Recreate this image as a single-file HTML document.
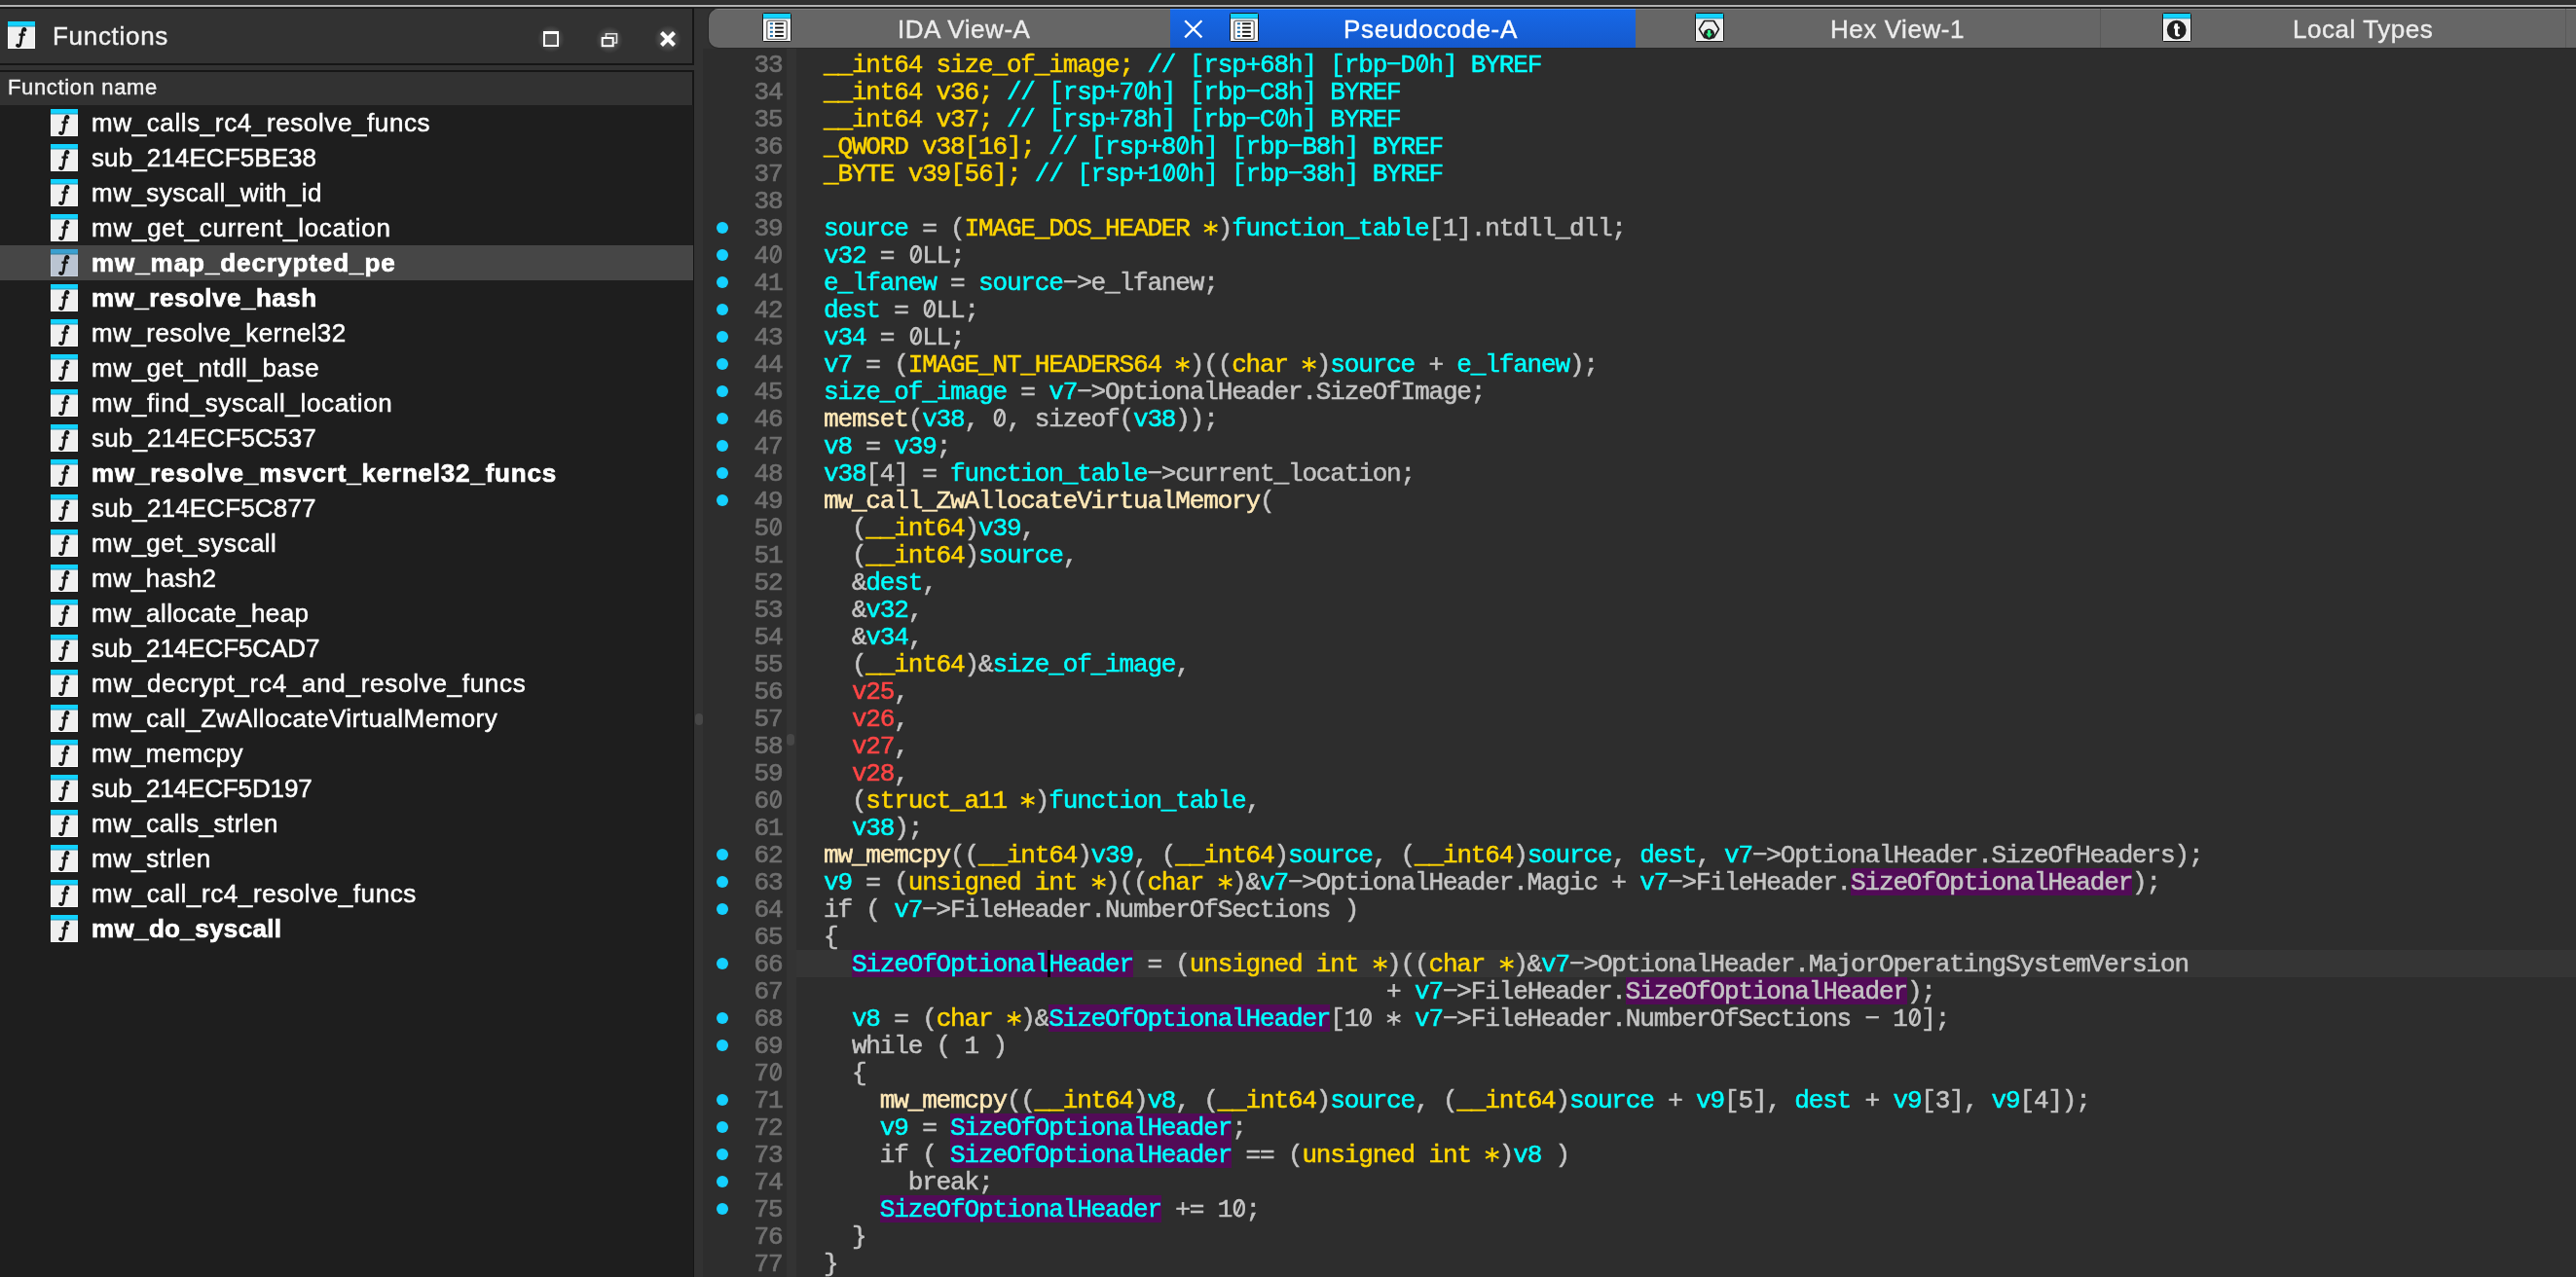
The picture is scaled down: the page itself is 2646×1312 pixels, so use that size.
<!DOCTYPE html>
<html><head><meta charset="utf-8"><title>IDA</title>
<style>
html,body{margin:0;padding:0;font-family:"Liberation Sans",sans-serif;}
html{width:2646px;height:1312px;overflow:hidden;background:#2d2d2d;}
body{width:2646px;height:1312px;overflow:hidden;background:#2d2d2d;position:relative;font-family:"Liberation Sans",sans-serif;}
div,span,b,i,em{box-sizing:border-box;}
.abs{position:absolute;}
#all{position:absolute;left:0;top:0;width:2646px;height:1312px;will-change:transform;overflow:hidden;}
/* top strip */
#top0{position:absolute;left:0;top:0;width:2646px;height:5px;background:linear-gradient(#303030 0,#303030 4px,#282828 4px);}
#topline{position:absolute;left:0;top:5px;width:2646px;height:2px;background:#b2b2b2;}
#topline2{position:absolute;left:0;top:7px;width:2646px;height:2px;background:#222222;}
/* left panel */
#lp{position:absolute;left:0;top:9px;width:722px;height:1303px;background:#323232;}
#tabbg{position:absolute;left:713px;top:9px;width:1933px;height:41px;background:#323232;}
#ltitle{position:absolute;left:0;top:8px;width:713px;height:59px;background:#323232;border-top:1px solid #161616;border-right:2px solid #161616;border-bottom:2px solid #161616;}
#ttl{-webkit-text-stroke:0.4px;position:absolute;left:54px;top:11px;font-size:26px;line-height:34px;color:#f2f2f2;letter-spacing:0.7px;}
.wbtn{position:absolute;}
#lhead{position:absolute;left:0;top:72px;width:713px;height:36px;background:#323232;border-top:2px solid #161616;border-right:2px solid #161616;}
#lhead span{-webkit-text-stroke:0.4px;position:absolute;left:8px;top:1px;font-size:22px;line-height:30px;color:#f2f2f2;letter-spacing:0.65px;}
#flist{position:absolute;left:0;top:108px;width:713px;height:1204px;background:#1e1e1e;overflow:hidden;border-right:1px solid #151515;}
.row{position:absolute;left:0;width:712px;height:36px;color:#fff;font-size:26px;line-height:36px;white-space:nowrap;letter-spacing:0.63px;}
.row span{position:absolute;left:94px;top:0;-webkit-text-stroke:0.5px;}
.row.b span{font-weight:bold;letter-spacing:0.9px;-webkit-text-stroke:0.7px;}
.row.sel{background:#464646;}
.fi{position:absolute;left:52px;top:4px;}
.fi.big{left:7.7px;top:12.8px;}
/* tabs */
#tabs{position:absolute;left:728px;top:9px;width:1918px;height:40px;background:#666666;box-shadow:0 0 0 1px #282828;border-radius:10px 0 0 10px;overflow:hidden;}
#thl{position:absolute;left:0;top:0;width:1918px;height:1px;background:#7e7e7e;}
#tabsel{position:absolute;left:474px;top:0;width:478px;height:40px;background:linear-gradient(#1769e8,#1559cd);box-shadow:inset 0 1px 0 #4b8df0;}
.tsep{position:absolute;top:0;width:1px;height:40px;background:#5a5a5a;}
.ticon{position:absolute;}
.tt{-webkit-text-stroke:0.4px;position:absolute;top:4px;font-size:26px;line-height:34px;color:#ececec;white-space:nowrap;letter-spacing:0.55px;}
.tt.sel{color:#fff;letter-spacing:0.7px;}
/* code */
#gut1{position:absolute;left:722px;top:50px;width:86px;height:1262px;background:#2d2d2d;}
#gut2{position:absolute;left:808px;top:50px;width:10px;height:1262px;background:#333333;}
#curline{position:absolute;left:818px;top:976px;width:1828px;height:28px;background:#353535;}
#code{position:absolute;left:0;top:0;width:2646px;height:1312px;font-family:"Liberation Mono",monospace;font-size:26px;letter-spacing:-1.15px;line-height:28px;color:#c4c4c4;white-space:pre;-webkit-text-stroke:0.55px;}
.ast{display:inline-block;width:14.45px;height:28px;vertical-align:top;overflow:visible;}
.cl{position:absolute;left:846px;height:28px;}
.ln{position:absolute;left:774.5px;height:28px;color:#707070;-webkit-text-stroke:0.7px;}
.dot{position:absolute;left:735.7px;width:12.6px;height:12.6px;border-radius:50%;background:#14d0ff;}
#cursor{position:absolute;left:1076px;top:976px;width:3px;height:28px;background:#000;}
.y{color:#ffd500;}
.c{color:#00ffff;}
.f{color:#ffe9b8;}
.r{color:#ff4545;}
.p{color:#00ffff;background:linear-gradient(#520b57,#520b57) no-repeat 0 0/100% 28px;}
.P{color:#c4c4c4;background:linear-gradient(#520b57,#520b57) no-repeat 0 0/100% 28px;}

</style></head>
<body>
<div id="all">
<div id="top0"></div><div id="topline"></div><div id="topline2"></div>
<div id="lp"></div><div id="tabbg"></div>
<div id="ltitle">
  <svg class="fi big" width="28" height="28" viewBox="0 0 28.5 28.5"><use href="#fico"/></svg>
  <span id="ttl">Functions</span>
  <svg class="wbtn" style="left:546px;top:11px" width="40" height="40" viewBox="0 0 40 40">
    <defs><radialGradient id="gl"><stop offset="0" stop-color="#5a5a5a"/><stop offset="0.6" stop-color="#4c4c4c"/><stop offset="1" stop-color="#323232"/></radialGradient></defs>
    <circle cx="20" cy="20" r="14" fill="url(#gl)"/>
    <rect x="13" y="13.5" width="14" height="13.5" fill="#555" stroke="#fff" stroke-width="2"/>
    <rect x="12" y="12" width="16" height="3" fill="#fff"/>
  </svg>
  <svg class="wbtn" style="left:606px;top:11px" width="40" height="40" viewBox="0 0 40 40">
    <circle cx="20" cy="21" r="14" fill="url(#gl)"/>
    <path d="M16.5 18 V14.7 H27.5 V24 H25" fill="none" stroke="#e0e0e0" stroke-width="1.6"/>
    <rect x="12.7" y="19" width="11" height="8.2" fill="#555" stroke="#fff" stroke-width="2"/>
  </svg>
  <svg class="wbtn" style="left:666px;top:11px" width="40" height="40" viewBox="0 0 40 40">
    <circle cx="20" cy="20" r="14" fill="url(#gl)"/>
    <path d="M13.5 13.5 L26.5 26.5 M26.5 13.5 L13.5 26.5" stroke="#fff" stroke-width="4.2" stroke-linecap="butt"/>
  </svg>
</div>
<div id="lhead"><span>Function name</span></div>
<!-- splitter handles -->
<div class="abs" style="left:713.6px;top:733px;width:8.4px;height:12px;border-radius:4px;background:#474747"></div>
<div class="abs" style="left:808px;top:754px;width:8px;height:12px;border-radius:4px;background:#474747;z-index:3"></div>
<!-- code gutters -->
<div id="gut1"></div><div id="gut2"></div>
<div id="curline"></div>
<!-- tab bar -->
<div id="tabs">
  <div id="thl"></div>
  <div id="tabsel"></div>
  <div class="tsep" style="left:1429px"></div>
  <div class="tsep" style="left:1907px"></div>
  <svg class="ticon" style="left:55px;top:4px" width="30" height="30" viewBox="0 0 30 30"><use href="#lsticon"/></svg>
  <span class="tt" style="left:194px">IDA View-A</span>
  <svg class="abs" style="left:488.3px;top:11.2px" width="20" height="20" viewBox="0 0 20 20"><path d="M1.2 1.2 L18.4 18.4 M18.4 1.2 L1.2 18.4" stroke="#fff" stroke-width="2.3"/></svg>
  <svg class="ticon" style="left:535px;top:4px" width="30" height="30" viewBox="0 0 30 30"><use href="#lsticon"/></svg>
  <span class="tt sel" style="left:652px">Pseudocode-A</span>
  <svg class="ticon" style="left:1013px;top:4px" width="30" height="30" viewBox="0 0 30 30">
    <rect x="0.5" y="0.5" width="29" height="29" rx="1" fill="#fff" stroke="#161616"/>
    <rect x="2" y="7" width="26" height="21" fill="#efefef"/>
    <rect x="1" y="1" width="28" height="5" fill="#12d2ff"/><rect x="1" y="5.4" width="28" height="1" fill="#2b8eaa"/>
    <path d="M4.4 16.9 L9.7 8.5 H19.4 L24.6 16.9 L19.4 25.6 H9.7 Z" fill="none" stroke="#1e1e1e" stroke-width="1.7" stroke-linejoin="round"/>
    <circle cx="14.5" cy="22.1" r="5.6" fill="#212121"/>
    <path d="M13 18 H16 V21.6 H18 L14.5 26 L11.2 21.6 H13 Z" fill="#2df08c"/>
  </svg>
  <span class="tt" style="left:1152px">Hex View-1</span>
  <svg class="ticon" style="left:1493px;top:4px" width="30" height="30" viewBox="0 0 30 30">
    <rect x="0.5" y="0.5" width="29" height="29" rx="1" fill="#fff" stroke="#161616"/>
    <rect x="2" y="7" width="26" height="21" fill="#efefef"/>
    <rect x="1" y="1" width="28" height="5" fill="#12d2ff"/><rect x="1" y="5.4" width="28" height="1" fill="#2b8eaa"/>
    <circle cx="14.7" cy="17.7" r="9.9" fill="#212121"/>
    <path d="M13.0 11.3 H16.1 V14.6 H17.9 V16.4 H16.1 V20.8 Q16.1 22.4 17.3 22.4 Q17.7 22.4 18.1 22.2 V24.0 Q17.2 24.4 16.2 24.4 Q13.0 24.4 13.0 21.2 V16.4 H11.9 V14.9 Z" fill="#fff"/>
  </svg>
  <span class="tt" style="left:1627px">Local Types</span>
</div>
<svg width="0" height="0" style="position:absolute">
  <defs>
    <g id="ast" fill="none" stroke="currentColor" stroke-width="2.15" stroke-linecap="butt"><path d="M7.7 6.1 V20.7 M1.0 9.95 L14.4 16.85 M14.4 9.95 L1.0 16.85"/></g>
    <g id="zero" fill="none" stroke="currentColor"><rect x="3.05" y="4.1" width="9.6" height="16.3" rx="4.8" ry="6.6" stroke-width="2.6"/><path d="M5.3 18.2 L10.4 6.2" stroke-width="2.0"/></g>
    <g id="fglyph" fill="none" stroke="#161616" stroke-linecap="round">
      <path d="M18.2 9.3 C18.6 7.0 16.0 6.8 15.5 9.8 L13.5 22.3 C13.0 25.7 11.6 27.0 9.9 25.5" stroke-width="2.7"/>
      <path d="M11.6 13.9 H18.2" stroke-width="2.3" stroke-linecap="butt"/>
      <circle cx="18.0" cy="9.0" r="1.0" fill="#161616" stroke-width="1.5"/>
      <circle cx="10.1" cy="25.0" r="1.0" fill="#161616" stroke-width="1.5"/>
    </g>
    <g id="fico">
      <rect x="0" y="0" width="28.5" height="28.5" fill="#ffffff"/>
      <rect x="1" y="6" width="26.5" height="21.5" fill="#efefef"/>
      <rect x="0" y="0" width="28.5" height="5.2" fill="#12d2ff"/>
      <rect x="0" y="4.6" width="28.5" height="1" fill="#2b8eaa"/>
      <use href="#fglyph"/>
    </g>
    <g id="ficosel">
      <rect x="0" y="0" width="28.5" height="28.5" fill="#c7d0dc"/>
      <rect x="1" y="6" width="26.5" height="21.5" fill="#bac4d2"/>
      <rect x="0" y="0" width="28.5" height="5.2" fill="#3aa0d0"/>
      <rect x="0" y="4.6" width="28.5" height="1" fill="#3a7896"/>
      <use href="#fglyph"/>
    </g>
    <g id="lsticon">
      <rect x="0.5" y="0.5" width="29" height="29" rx="1" fill="#fff" stroke="#161616"/>
      <rect x="2" y="7" width="26" height="21" fill="#f4f4f4"/>
      <rect x="1" y="1" width="28" height="5" fill="#12d2ff"/><rect x="1" y="5.4" width="28" height="1" fill="#2b8eaa"/>
      <rect x="4.8" y="8.4" width="20.4" height="19" rx="1.8" fill="#fdfdfd" stroke="#6e6e6e" stroke-width="1.4"/>
      <g fill="#1568a6"><rect x="7.9" y="10.4" width="3" height="1.9"/><rect x="7.9" y="14.6" width="3" height="1.9"/><rect x="7.9" y="18.8" width="3" height="1.9"/><rect x="7.9" y="23" width="3" height="1.9"/></g>
      <g fill="#111"><rect x="13.1" y="10.4" width="8.7" height="1.9"/><rect x="13.1" y="14.6" width="8.7" height="1.9"/><rect x="13.1" y="18.8" width="8.7" height="1.9"/><rect x="13.1" y="23" width="8.7" height="1.9"/></g>
    </g>
  </defs>
</svg>
<div id="flist">
<div class="row" style="top:0px"><svg class="fi" width="28" height="28" viewBox="0 0 28.5 28.5"><use href="#fico"/></svg><span style="letter-spacing:0.61px">mw_calls_rc4_resolve_funcs</span></div>
<div class="row" style="top:36px"><svg class="fi" width="28" height="28" viewBox="0 0 28.5 28.5"><use href="#fico"/></svg><span style="letter-spacing:0.09px">sub_214ECF5BE38</span></div>
<div class="row" style="top:72px"><svg class="fi" width="28" height="28" viewBox="0 0 28.5 28.5"><use href="#fico"/></svg><span style="letter-spacing:0.48px">mw_syscall_with_id</span></div>
<div class="row" style="top:108px"><svg class="fi" width="28" height="28" viewBox="0 0 28.5 28.5"><use href="#fico"/></svg><span style="letter-spacing:0.75px">mw_get_current_location</span></div>
<div class="row b sel" style="top:144px"><svg class="fi" width="28" height="28" viewBox="0 0 28.5 28.5"><use href="#ficosel"/></svg><span style="letter-spacing:0.94px">mw_map_decrypted_pe</span></div>
<div class="row b" style="top:180px"><svg class="fi" width="28" height="28" viewBox="0 0 28.5 28.5"><use href="#fico"/></svg><span style="letter-spacing:0.51px">mw_resolve_hash</span></div>
<div class="row" style="top:216px"><svg class="fi" width="28" height="28" viewBox="0 0 28.5 28.5"><use href="#fico"/></svg><span style="letter-spacing:0.46px">mw_resolve_kernel32</span></div>
<div class="row" style="top:252px"><svg class="fi" width="28" height="28" viewBox="0 0 28.5 28.5"><use href="#fico"/></svg><span style="letter-spacing:0.60px">mw_get_ntdll_base</span></div>
<div class="row" style="top:288px"><svg class="fi" width="28" height="28" viewBox="0 0 28.5 28.5"><use href="#fico"/></svg><span style="letter-spacing:0.67px">mw_find_syscall_location</span></div>
<div class="row" style="top:324px"><svg class="fi" width="28" height="28" viewBox="0 0 28.5 28.5"><use href="#fico"/></svg><span style="letter-spacing:0.17px">sub_214ECF5C537</span></div>
<div class="row b" style="top:360px"><svg class="fi" width="28" height="28" viewBox="0 0 28.5 28.5"><use href="#fico"/></svg><span style="letter-spacing:0.80px">mw_resolve_msvcrt_kernel32_funcs</span></div>
<div class="row" style="top:396px"><svg class="fi" width="28" height="28" viewBox="0 0 28.5 28.5"><use href="#fico"/></svg><span style="letter-spacing:0.15px">sub_214ECF5C877</span></div>
<div class="row" style="top:432px"><svg class="fi" width="28" height="28" viewBox="0 0 28.5 28.5"><use href="#fico"/></svg><span style="letter-spacing:0.49px">mw_get_syscall</span></div>
<div class="row" style="top:468px"><svg class="fi" width="28" height="28" viewBox="0 0 28.5 28.5"><use href="#fico"/></svg><span style="letter-spacing:0.32px">mw_hash2</span></div>
<div class="row" style="top:504px"><svg class="fi" width="28" height="28" viewBox="0 0 28.5 28.5"><use href="#fico"/></svg><span style="letter-spacing:0.41px">mw_allocate_heap</span></div>
<div class="row" style="top:540px"><svg class="fi" width="28" height="28" viewBox="0 0 28.5 28.5"><use href="#fico"/></svg><span style="letter-spacing:-0.08px">sub_214ECF5CAD7</span></div>
<div class="row" style="top:576px"><svg class="fi" width="28" height="28" viewBox="0 0 28.5 28.5"><use href="#fico"/></svg><span style="letter-spacing:0.72px">mw_decrypt_rc4_and_resolve_funcs</span></div>
<div class="row" style="top:612px"><svg class="fi" width="28" height="28" viewBox="0 0 28.5 28.5"><use href="#fico"/></svg><span style="letter-spacing:0.47px">mw_call_ZwAllocateVirtualMemory</span></div>
<div class="row" style="top:648px"><svg class="fi" width="28" height="28" viewBox="0 0 28.5 28.5"><use href="#fico"/></svg><span style="letter-spacing:0.30px">mw_memcpy</span></div>
<div class="row" style="top:684px"><svg class="fi" width="28" height="28" viewBox="0 0 28.5 28.5"><use href="#fico"/></svg><span style="letter-spacing:-0.12px">sub_214ECF5D197</span></div>
<div class="row" style="top:720px"><svg class="fi" width="28" height="28" viewBox="0 0 28.5 28.5"><use href="#fico"/></svg><span style="letter-spacing:0.46px">mw_calls_strlen</span></div>
<div class="row" style="top:756px"><svg class="fi" width="28" height="28" viewBox="0 0 28.5 28.5"><use href="#fico"/></svg><span style="letter-spacing:0.46px">mw_strlen</span></div>
<div class="row" style="top:792px"><svg class="fi" width="28" height="28" viewBox="0 0 28.5 28.5"><use href="#fico"/></svg><span style="letter-spacing:0.58px">mw_call_rc4_resolve_funcs</span></div>
<div class="row b" style="top:828px"><svg class="fi" width="28" height="28" viewBox="0 0 28.5 28.5"><use href="#fico"/></svg><span style="letter-spacing:0.36px">mw_do_syscall</span></div>
</div>
<div id="code">
<div class="ln" style="top:53px">33</div><div class="cl" style="top:53px"><span class="y">__int64 size_of_image;</span> <span class="c">// [rsp+68h] [rbp−D<svg class="ast" viewBox="0 0 14.45 28"><use href="#zero"/></svg>h] BYREF</span></div>
<div class="ln" style="top:81px">34</div><div class="cl" style="top:81px"><span class="y">__int64 v36;</span> <span class="c">// [rsp+7<svg class="ast" viewBox="0 0 14.45 28"><use href="#zero"/></svg>h] [rbp−C8h] BYREF</span></div>
<div class="ln" style="top:109px">35</div><div class="cl" style="top:109px"><span class="y">__int64 v37;</span> <span class="c">// [rsp+78h] [rbp−C<svg class="ast" viewBox="0 0 14.45 28"><use href="#zero"/></svg>h] BYREF</span></div>
<div class="ln" style="top:137px">36</div><div class="cl" style="top:137px"><span class="y">_QWORD v38[16];</span> <span class="c">// [rsp+8<svg class="ast" viewBox="0 0 14.45 28"><use href="#zero"/></svg>h] [rbp−B8h] BYREF</span></div>
<div class="ln" style="top:165px">37</div><div class="cl" style="top:165px"><span class="y">_BYTE v39[56];</span> <span class="c">// [rsp+1<svg class="ast" viewBox="0 0 14.45 28"><use href="#zero"/></svg><svg class="ast" viewBox="0 0 14.45 28"><use href="#zero"/></svg>h] [rbp−38h] BYREF</span></div>
<div class="ln" style="top:193px">38</div>
<b class="dot" style="top:227.5px"></b><div class="ln" style="top:221px">39</div><div class="cl" style="top:221px"><span class="c">source</span> = (<span class="y">IMAGE_DOS_HEADER <svg class="ast" viewBox="0 0 14.45 28"><use href="#ast"/></svg></span>)<span class="c">function_table</span>[1].ntdll_dll;</div>
<b class="dot" style="top:255.5px"></b><div class="ln" style="top:249px">4<svg class="ast" viewBox="0 0 14.45 28"><use href="#zero"/></svg></div><div class="cl" style="top:249px"><span class="c">v32</span> = <svg class="ast" viewBox="0 0 14.45 28"><use href="#zero"/></svg>LL;</div>
<b class="dot" style="top:283.5px"></b><div class="ln" style="top:277px">41</div><div class="cl" style="top:277px"><span class="c">e_lfanew</span> = <span class="c">source</span>−&gt;e_lfanew;</div>
<b class="dot" style="top:311.5px"></b><div class="ln" style="top:305px">42</div><div class="cl" style="top:305px"><span class="c">dest</span> = <svg class="ast" viewBox="0 0 14.45 28"><use href="#zero"/></svg>LL;</div>
<b class="dot" style="top:339.5px"></b><div class="ln" style="top:333px">43</div><div class="cl" style="top:333px"><span class="c">v34</span> = <svg class="ast" viewBox="0 0 14.45 28"><use href="#zero"/></svg>LL;</div>
<b class="dot" style="top:367.5px"></b><div class="ln" style="top:361px">44</div><div class="cl" style="top:361px"><span class="c">v7</span> = (<span class="y">IMAGE_NT_HEADERS64 <svg class="ast" viewBox="0 0 14.45 28"><use href="#ast"/></svg></span>)((<span class="y">char <svg class="ast" viewBox="0 0 14.45 28"><use href="#ast"/></svg></span>)<span class="c">source</span> + <span class="c">e_lfanew</span>);</div>
<b class="dot" style="top:395.5px"></b><div class="ln" style="top:389px">45</div><div class="cl" style="top:389px"><span class="c">size_of_image</span> = <span class="c">v7</span>−&gt;OptionalHeader.SizeOfImage;</div>
<b class="dot" style="top:423.5px"></b><div class="ln" style="top:417px">46</div><div class="cl" style="top:417px"><span class="f">memset</span>(<span class="c">v38</span>, <svg class="ast" viewBox="0 0 14.45 28"><use href="#zero"/></svg>, sizeof(<span class="c">v38</span>));</div>
<b class="dot" style="top:451.5px"></b><div class="ln" style="top:445px">47</div><div class="cl" style="top:445px"><span class="c">v8</span> = <span class="c">v39</span>;</div>
<b class="dot" style="top:479.5px"></b><div class="ln" style="top:473px">48</div><div class="cl" style="top:473px"><span class="c">v38</span>[4] = <span class="c">function_table</span>−&gt;current_location;</div>
<b class="dot" style="top:507.5px"></b><div class="ln" style="top:501px">49</div><div class="cl" style="top:501px"><span class="f">mw_call_ZwAllocateVirtualMemory</span>(</div>
<div class="ln" style="top:529px">5<svg class="ast" viewBox="0 0 14.45 28"><use href="#zero"/></svg></div><div class="cl" style="top:529px">  (<span class="y">__int64</span>)<span class="c">v39</span>,</div>
<div class="ln" style="top:557px">51</div><div class="cl" style="top:557px">  (<span class="y">__int64</span>)<span class="c">source</span>,</div>
<div class="ln" style="top:585px">52</div><div class="cl" style="top:585px">  &amp;<span class="c">dest</span>,</div>
<div class="ln" style="top:613px">53</div><div class="cl" style="top:613px">  &amp;<span class="c">v32</span>,</div>
<div class="ln" style="top:641px">54</div><div class="cl" style="top:641px">  &amp;<span class="c">v34</span>,</div>
<div class="ln" style="top:669px">55</div><div class="cl" style="top:669px">  (<span class="y">__int64</span>)&amp;<span class="c">size_of_image</span>,</div>
<div class="ln" style="top:697px">56</div><div class="cl" style="top:697px">  <span class="r">v25</span>,</div>
<div class="ln" style="top:725px">57</div><div class="cl" style="top:725px">  <span class="r">v26</span>,</div>
<div class="ln" style="top:753px">58</div><div class="cl" style="top:753px">  <span class="r">v27</span>,</div>
<div class="ln" style="top:781px">59</div><div class="cl" style="top:781px">  <span class="r">v28</span>,</div>
<div class="ln" style="top:809px">6<svg class="ast" viewBox="0 0 14.45 28"><use href="#zero"/></svg></div><div class="cl" style="top:809px">  (<span class="y">struct_a11 <svg class="ast" viewBox="0 0 14.45 28"><use href="#ast"/></svg></span>)<span class="c">function_table</span>,</div>
<div class="ln" style="top:837px">61</div><div class="cl" style="top:837px">  <span class="c">v38</span>);</div>
<b class="dot" style="top:871.5px"></b><div class="ln" style="top:865px">62</div><div class="cl" style="top:865px"><span class="f">mw_memcpy</span>((<span class="y">__int64</span>)<span class="c">v39</span>, (<span class="y">__int64</span>)<span class="c">source</span>, (<span class="y">__int64</span>)<span class="c">source</span>, <span class="c">dest</span>, <span class="c">v7</span>−&gt;OptionalHeader.SizeOfHeaders);</div>
<b class="dot" style="top:899.5px"></b><div class="ln" style="top:893px">63</div><div class="cl" style="top:893px"><span class="c">v9</span> = (<span class="y">unsigned int <svg class="ast" viewBox="0 0 14.45 28"><use href="#ast"/></svg></span>)((<span class="y">char <svg class="ast" viewBox="0 0 14.45 28"><use href="#ast"/></svg></span>)&amp;<span class="c">v7</span>−&gt;OptionalHeader.Magic + <span class="c">v7</span>−&gt;FileHeader.<span class="P">SizeOfOptionalHeader</span>);</div>
<b class="dot" style="top:927.5px"></b><div class="ln" style="top:921px">64</div><div class="cl" style="top:921px">if ( <span class="c">v7</span>−&gt;FileHeader.NumberOfSections )</div>
<div class="ln" style="top:949px">65</div><div class="cl" style="top:949px">{</div>
<b class="dot" style="top:983.5px"></b><div class="ln" style="top:977px">66</div><div class="cl" style="top:977px">  <span class="p">SizeOfOptionalHeader</span> = (<span class="y">unsigned int <svg class="ast" viewBox="0 0 14.45 28"><use href="#ast"/></svg></span>)((<span class="y">char <svg class="ast" viewBox="0 0 14.45 28"><use href="#ast"/></svg></span>)&amp;<span class="c">v7</span>−&gt;OptionalHeader.MajorOperatingSystemVersion</div>
<div class="ln" style="top:1005px">67</div><div class="cl" style="top:1005px">                                        + <span class="c">v7</span>−&gt;FileHeader.<span class="P">SizeOfOptionalHeader</span>);</div>
<b class="dot" style="top:1039.5px"></b><div class="ln" style="top:1033px">68</div><div class="cl" style="top:1033px">  <span class="c">v8</span> = (<span class="y">char <svg class="ast" viewBox="0 0 14.45 28"><use href="#ast"/></svg></span>)&amp;<span class="p">SizeOfOptionalHeader</span>[1<svg class="ast" viewBox="0 0 14.45 28"><use href="#zero"/></svg> <svg class="ast" viewBox="0 0 14.45 28"><use href="#ast"/></svg> <span class="c">v7</span>−&gt;FileHeader.NumberOfSections − 1<svg class="ast" viewBox="0 0 14.45 28"><use href="#zero"/></svg>];</div>
<b class="dot" style="top:1067.5px"></b><div class="ln" style="top:1061px">69</div><div class="cl" style="top:1061px">  while ( 1 )</div>
<div class="ln" style="top:1089px">7<svg class="ast" viewBox="0 0 14.45 28"><use href="#zero"/></svg></div><div class="cl" style="top:1089px">  {</div>
<b class="dot" style="top:1123.5px"></b><div class="ln" style="top:1117px">71</div><div class="cl" style="top:1117px">    <span class="f">mw_memcpy</span>((<span class="y">__int64</span>)<span class="c">v8</span>, (<span class="y">__int64</span>)<span class="c">source</span>, (<span class="y">__int64</span>)<span class="c">source</span> + <span class="c">v9</span>[5], <span class="c">dest</span> + <span class="c">v9</span>[3], <span class="c">v9</span>[4]);</div>
<b class="dot" style="top:1151.5px"></b><div class="ln" style="top:1145px">72</div><div class="cl" style="top:1145px">    <span class="c">v9</span> = <span class="p">SizeOfOptionalHeader</span>;</div>
<b class="dot" style="top:1179.5px"></b><div class="ln" style="top:1173px">73</div><div class="cl" style="top:1173px">    if ( <span class="p">SizeOfOptionalHeader</span> == (<span class="y">unsigned int <svg class="ast" viewBox="0 0 14.45 28"><use href="#ast"/></svg></span>)<span class="c">v8</span> )</div>
<b class="dot" style="top:1207.5px"></b><div class="ln" style="top:1201px">74</div><div class="cl" style="top:1201px">      break;</div>
<b class="dot" style="top:1235.5px"></b><div class="ln" style="top:1229px">75</div><div class="cl" style="top:1229px">    <span class="p">SizeOfOptionalHeader</span> += 1<svg class="ast" viewBox="0 0 14.45 28"><use href="#zero"/></svg>;</div>
<div class="ln" style="top:1257px">76</div><div class="cl" style="top:1257px">  }</div>
<div class="ln" style="top:1285px">77</div><div class="cl" style="top:1285px">}</div>
<div id="cursor"></div>
</div>
</div>
</body></html>
